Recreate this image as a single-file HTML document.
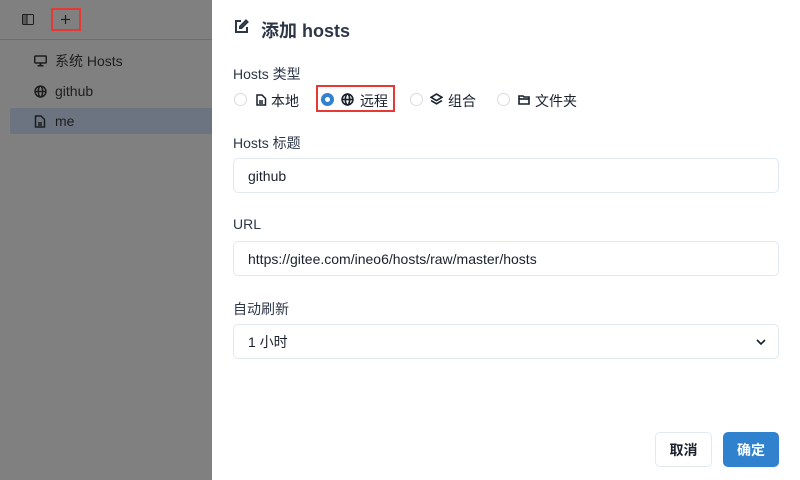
<!DOCTYPE html>
<html><head><meta charset="utf-8"><style>
*{box-sizing:border-box;margin:0;padding:0}
body{width:800px;height:480px;overflow:hidden;position:relative;background:#fff;font-family:"Liberation Sans","Noto Sans CJK SC",sans-serif;color:#1a202c}
.side{position:absolute;left:0;top:0;width:212px;height:480px;background:#808080}
.topbar{height:40px;border-bottom:1px solid #6e6e6e;position:relative}
.item{position:absolute;left:10px;width:202px;height:26px;font-size:14px;color:#1e1e1e;line-height:26px;padding-left:45px}
.item svg{position:absolute;left:24px;top:7px}
.sel{background:#6b7480;border-radius:2px 0 0 2px}
.panel{position:absolute;left:212px;top:0;width:588px;height:480px;background:#fff}
.lbl{position:absolute;left:21px;font-size:14px;color:#2d3748}
.inp{position:absolute;left:21px;width:546px;height:35px;border:1px solid #e2e8f0;border-radius:5px;font-size:14px;line-height:35px;padding-left:14px;color:#1a202c}
.radio{position:absolute;top:93px;width:13px;height:13px;border:1px solid #d5dce5;border-radius:50%}
.rt{position:absolute;top:91px;font-size:14px;color:#1a202c}
.btn{position:absolute;top:432px;height:35px;border-radius:5px;font-size:14px;font-weight:bold;display:flex;align-items:center;justify-content:center}
</style></head><body>
<div class="side">
 <div class="topbar">
  <svg style="position:absolute;left:22px;top:14px" width="12" height="11" viewBox="0 0 12 11"><rect x="0.5" y="0.5" width="11" height="10" rx="1" fill="none" stroke="#1e1e1e"/><line x1="5" y1="1" x2="5" y2="10" stroke="#1e1e1e"/><rect x="1" y="1" width="4" height="9" fill="#1e1e1e" opacity=".4"/></svg>
  <div style="position:absolute;left:51px;top:8px;width:30px;height:23px;border:2px solid #e53935"></div>
  <svg style="position:absolute;left:61px;top:15px" width="9" height="9" viewBox="0 0 9 9" stroke="#1e1e1e" stroke-width="1.2"><line x1="4.5" y1="0" x2="4.5" y2="9"/><line x1="0" y1="4.5" x2="9" y2="4.5"/></svg>
 </div>
 <div class="item" style="top:48px"><svg width="13" height="12" viewBox="0 0 13 12"><rect x="0.75" y="1" width="11.5" height="7" rx="1" fill="none" stroke="#1e1e1e" stroke-width="1.5"/><rect x="5.5" y="8" width="2" height="2" fill="#1e1e1e"/><rect x="3.5" y="10" width="6" height="1.5" fill="#1e1e1e"/></svg>系统 Hosts</div>
 <div class="item" style="top:78px"><svg width="13" height="13" viewBox="0 0 12 12" fill="none" stroke="#1e1e1e" stroke-width="1.4"><circle cx="6" cy="6" r="5"/><ellipse cx="6" cy="6" rx="2" ry="5"/><line x1="1" y1="6" x2="11" y2="6"/></svg>github</div>
 <div class="item sel" style="top:108px"><svg width="12" height="13" viewBox="0 0 12 13" fill="none" stroke="#1e1e1e" stroke-width="1.5"><path d="M1.5 1h5.5l3.5 3.5V12h-9z"/><line x1="4" y1="8" x2="8" y2="8"/><line x1="4" y1="10" x2="8" y2="10"/></svg>me</div>
</div>
<div class="panel">
 <svg style="position:absolute;left:22px;top:19px" width="15" height="15" viewBox="0 0 15 15" fill="none" stroke="#2d3748" stroke-width="2"><path d="M7 2H2v11h11V8"/><path d="M12 1.5l1.5 1.5L7.5 9H6V7.5z"/></svg>
 <div style="position:absolute;left:49px;top:17px;font-size:18px;font-weight:bold;color:#2d3748">添加 hosts</div>
 <div class="lbl" style="top:64px">Hosts 类型</div>
 <div class="radio" style="left:22px"></div>
 <svg style="position:absolute;left:44px;top:94px" width="11" height="12" viewBox="0 0 11 12" fill="none" stroke="#1a202c" stroke-width="1.5"><path d="M1 1h5l3.5 3.5V11H1z"/><line x1="3" y1="7" x2="7" y2="7"/><line x1="3" y1="9" x2="7" y2="9"/></svg>
 <div class="rt" style="left:59px">本地</div>
 <div style="position:absolute;left:104px;top:85px;width:79px;height:27px;border:2px solid #e53935"></div>
 <div class="radio" style="left:109px;border:4px solid #3182ce;background:#fff"></div>
 <svg style="position:absolute;left:129px;top:93px" width="13" height="13" viewBox="0 0 12 12" fill="none" stroke="#1a202c" stroke-width="1.5"><circle cx="6" cy="6" r="5"/><ellipse cx="6" cy="6" rx="2" ry="5"/><line x1="1" y1="6" x2="11" y2="6"/></svg>
 <div class="rt" style="left:148px">远程</div>
 <div class="radio" style="left:198px"></div>
 <svg style="position:absolute;left:218px;top:93px" width="13" height="13" viewBox="0 0 12 12" fill="none" stroke="#1a202c" stroke-width="1.5"><path d="M6 1l5 3-5 3-5-3z"/><path d="M1 7l5 3 5-3"/></svg>
 <div class="rt" style="left:236px">组合</div>
 <div class="radio" style="left:285px"></div>
 <svg style="position:absolute;left:306px;top:94px" width="12" height="11" viewBox="0 0 12 11" fill="none" stroke="#1a202c" stroke-width="1.6"><path d="M1 2h4l1 1h5v7H1z"/><line x1="1" y1="5" x2="11" y2="5"/></svg>
 <div class="rt" style="left:323px">文件夹</div>
 <div class="lbl" style="top:133px">Hosts 标题</div>
 <div class="inp" style="top:158px">github</div>
 <div class="lbl" style="top:216px">URL</div>
 <div class="inp" style="top:241px">https://gitee.com/ineo6/hosts/raw/master/hosts</div>
 <div class="lbl" style="top:299px">自动刷新</div>
 <div class="inp" style="top:324px">1 小时<svg style="position:absolute;right:12px;top:14px" width="10" height="6" viewBox="0 0 10 6" fill="none" stroke="#1a202c" stroke-width="1.6"><path d="M1 1l4 4 4-4"/></svg></div>
 <div class="btn" style="left:443px;width:57px;border:1px solid #e2e8f0;color:#1a202c">取消</div>
 <div class="btn" style="left:511px;width:56px;background:#3182ce;color:#fff">确定</div>
</div>
</body></html>
